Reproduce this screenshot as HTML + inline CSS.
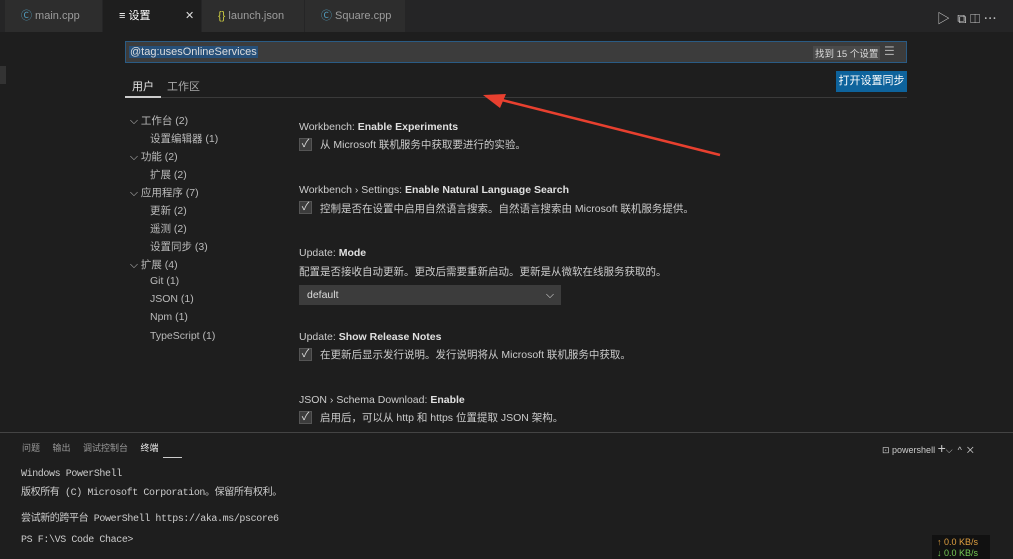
<!DOCTYPE html>
<html><head><meta charset="utf-8"><style>
*{margin:0;padding:0;box-sizing:border-box}
body{width:1013px;height:559px;background:#1e1e1e;font-family:"Liberation Sans","Noto Sans CJK SC",sans-serif;color:#ccc;position:relative;overflow:hidden;font-size:11px}
.a{position:absolute;white-space:nowrap}
.tabs{position:absolute;left:0;top:0;width:1013px;height:32px;background:#252526}
.tab{position:absolute;top:0;height:32px;background:#2d2d2d;color:#9d9d9d;font-size:11px;line-height:32px;padding-left:16px}
.chk{position:absolute;width:13px;height:13px;background:#3c3c3c;border:1px solid #555;color:#ddd;font-size:11px;line-height:11px;text-align:center}
.t{font-size:10.5px;color:#ccc}
.h{font-size:10.5px;color:#ccc}
.h b{color:#e0e0e0}
.tr{font-size:10.5px;color:#bbb}
.mono{font-family:"Liberation Mono","Noto Sans CJK SC",monospace;font-size:10px;color:#ccc;letter-spacing:-0.4px}
</style></head><body>
<div class="tabs">
<div class="tab" style="left:5px;width:97px"><span style="color:#519aba">Ⓒ</span> main.cpp</div>
<div class="tab" style="left:103px;width:98px;background:#1e1e1e;color:#fff">≡ 设置 <span style="position:absolute;left:82px;color:#ddd">✕</span></div>
<div class="tab" style="left:202px;width:102px"><span style="color:#cbcb41">{}</span> launch.json</div>
<div class="tab" style="left:305px;width:100px"><span style="color:#519aba">Ⓒ</span> Square.cpp</div>
<div class="a" style="left:937px;top:8px;color:#ccc;font-size:13px">▷ &nbsp;⧉ ◫ ⋯</div>
</div>
<div class="a" style="left:0;top:66px;width:6px;height:18px;background:#333"></div>
<div class="a" style="left:125px;top:41px;width:782px;height:22px;background:#3c3c3c;border:1px solid #2a5b84"></div>
<div class="a" style="left:129px;top:46px;background:#264f78;color:#ddd;font-size:11px;padding:0 1px">@tag:usesOnlineServices</div>
<div class="a" style="left:813px;top:46px;background:#4a4a4a;color:#ddd;font-size:9.5px;padding:0 2px">找到 15 个设置</div>
<div class="a" style="left:884px;top:44px;color:#aaa;font-size:12px">☰</div>
<div class="a" style="left:836px;top:71px;width:71px;height:21px;background:#0e639c;color:#fff;font-size:11px;line-height:21px;text-align:center">打开设置同步</div>
<div class="a" style="left:132px;top:78px;color:#e7e7e7;font-size:11px">用户</div>
<div class="a" style="left:167px;top:78px;color:#aaa;font-size:11px">工作区</div>
<div class="a" style="left:125px;top:97px;width:782px;height:1px;background:#3a3a3a"></div>
<div class="a" style="left:125px;top:96px;width:36px;height:2px;background:#ccc"></div>
<svg class="a" style="left:480px;top:90px" width="245" height="70"><line x1="240" y1="65" x2="14" y2="8" stroke="#e8402f" stroke-width="2.5"/><polygon points="3,5 26,4 20,18" fill="#e8402f"/></svg>
<div class="tr a" style="left:130px;top:113px">⌵ 工作台 (2)</div>
<div class="tr a" style="left:150px;top:131px">设置编辑器 (1)</div>
<div class="tr a" style="left:130px;top:149px">⌵ 功能 (2)</div>
<div class="tr a" style="left:150px;top:167px">扩展 (2)</div>
<div class="tr a" style="left:130px;top:185px">⌵ 应用程序 (7)</div>
<div class="tr a" style="left:150px;top:203px">更新 (2)</div>
<div class="tr a" style="left:150px;top:221px">遥测 (2)</div>
<div class="tr a" style="left:150px;top:239px">设置同步 (3)</div>
<div class="tr a" style="left:130px;top:257px">⌵ 扩展 (4)</div>
<div class="tr a" style="left:150px;top:275px">Git (1)</div>
<div class="tr a" style="left:150px;top:293px">JSON (1)</div>
<div class="tr a" style="left:150px;top:311px">Npm (1)</div>
<div class="tr a" style="left:150px;top:330px">TypeScript (1)</div>

<div class="h a" style="left:299px;top:121px">Workbench: <b>Enable Experiments</b></div>
<div class="chk" style="left:299px;top:138px">✓</div><div class="t a" style="left:320px;top:137px">从 Microsoft 联机服务中获取要进行的实验。</div>
<div class="h a" style="left:299px;top:184px">Workbench › Settings: <b>Enable Natural Language Search</b></div>
<div class="chk" style="left:299px;top:201px">✓</div><div class="t a" style="left:320px;top:201px">控制是否在设置中启用自然语言搜索。自然语言搜索由 Microsoft 联机服务提供。</div>
<div class="h a" style="left:299px;top:247px">Update: <b>Mode</b></div>
<div class="t a" style="left:299px;top:264px">配置是否接收自动更新。更改后需要重新启动。更新是从微软在线服务获取的。</div>
<div class="a" style="left:299px;top:285px;width:262px;height:20px;background:#3c3c3c;border:1px solid #3c3c3c;color:#ddd;font-size:10.5px;line-height:18px;padding-left:7px">default<span style="position:absolute;right:6px">⌵</span></div>
<div class="h a" style="left:299px;top:331px">Update: <b>Show Release Notes</b></div>
<div class="chk" style="left:299px;top:348px">✓</div><div class="t a" style="left:320px;top:347px">在更新后显示发行说明。发行说明将从 Microsoft 联机服务中获取。</div>
<div class="h a" style="left:299px;top:394px">JSON › Schema Download: <b>Enable</b></div>
<div class="chk" style="left:299px;top:411px">✓</div><div class="t a" style="left:320px;top:410px">启用后，可以从 http 和 https 位置提取 JSON 架构。</div>

<div class="a" style="left:0;top:432px;width:1013px;height:127px;background:#1e1e1e;border-top:1px solid #444"></div>
<div class="a" style="left:22px;top:441px;color:#999;font-size:9px">问题 &nbsp;&nbsp;&nbsp;&nbsp;输出 &nbsp;&nbsp;&nbsp;&nbsp;调试控制台 &nbsp;&nbsp;&nbsp;&nbsp;<span style="color:#e7e7e7">终端</span></div>
<div class="a" style="left:163px;top:457px;width:19px;height:1px;background:#ccc"></div>
<div class="a" style="left:882px;top:440px;color:#ccc;font-size:9px">⊡ powershell <span style="font-size:14px">+</span>⌵ &nbsp;^ &nbsp;✕</div>
<div class="mono a" style="left:21px;top:469px">Windows PowerShell</div>
<div class="mono a" style="left:21px;top:483px">版权所有 (C) Microsoft Corporation。保留所有权利。</div>
<div class="mono a" style="left:21px;top:509px">尝试新的跨平台 PowerShell https://aka.ms/pscore6</div>
<div class="mono a" style="left:21px;top:535px">PS F:\VS Code Chace&gt;</div>
<div class="a" style="left:932px;top:535px;width:58px;height:24px;background:#111;font-size:9px;padding:2px 5px;color:#e0a040;line-height:11px">↑ 0.0 KB/s<br><span style="color:#7c5">↓ 0.0 KB/s</span></div>
</body></html>
